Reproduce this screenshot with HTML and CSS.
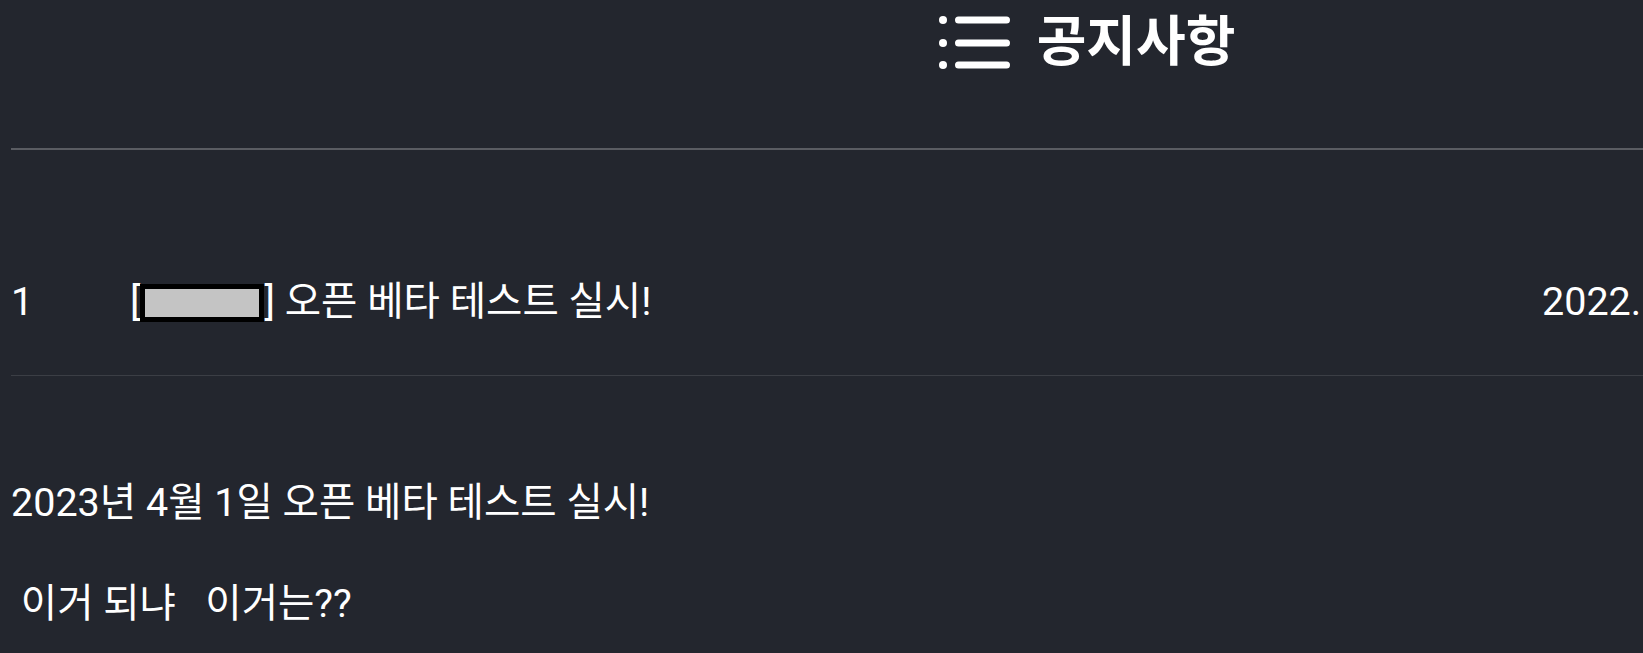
FILE: index.html
```html
<!doctype html>
<html lang="ko">
<head>
  <meta charset="UTF-8">
  <title>공지사항</title>
  <link rel="stylesheet" href="styles.css">
</head>
<body>

<div id="board">
  <div class="head">
    <h1>
      <svg class="ico" width="72" height="56" viewBox="0 0 72 56">
        <circle cx="4" cy="5" r="4" />
        <circle cx="4" cy="28" r="4" />
        <circle cx="4" cy="50" r="4" />
        <path d="M19.5 5H67.5M19.5 28H67.5M19.5 50H67.5" />
      </svg>
      <span>공지사항</span>
    </h1>
  </div>

  <div class="row">
    <span class="num">1</span>
    <span class="title">[<span class="hide"></span>] 오픈 베타 테스트 실시!</span>
    <span class="date">2022.12.30</span>
  </div>

  <div class="body">
    <p>2023년 4월 1일 오픈 베타 테스트 실시!</p>
    <p>&nbsp;이거 되냐&nbsp;&nbsp;&nbsp;이거는??</p>
  </div>
</div>

</body>
</html>
```

FILE: styles.css
```css
html, body {
  overflow-x: hidden;
}

body {
  margin: 0;
  background: #23262e;
  color: #fff;
  font-family: 'Roboto', 'Noto Sans CJK KR', sans-serif;
}

#board {
  width: 2152px;
  margin-left: 11px;
}

.head {
  height: 148px;
  border-bottom: 2px solid #5a5c62;
}

.head h1 {
  display: flex;
  justify-content: center;
  align-items: center;
  gap: 26px;
  margin: 0;
  padding-top: 13px;
  font-size: 54px;
  line-height: 60px;
  font-weight: 700;
}

.ico {
  fill: #fff;
  stroke: #fff;
  stroke-width: 7;
  stroke-linecap: round;
}

.ico circle {
  stroke: none;
}

.row {
  display: grid;
  grid-template-columns: 119px 1412px auto;
  padding: 127px 0 48px;
  border-bottom: 1px solid #3b3e45;
  font-size: 39.5px;
  line-height: 50px;
  white-space: nowrap;
}

.hide {
  display: inline-block;
  width: 114px;
  height: 28px;
  border: 5px solid #000;
  background: #c4c4c4;
  vertical-align: -7px;
}

.body {
  padding-top: 102px;
  font-size: 39.5px;
  line-height: 50px;
}

.body p {
  margin: 0 0 51px;
}
```
